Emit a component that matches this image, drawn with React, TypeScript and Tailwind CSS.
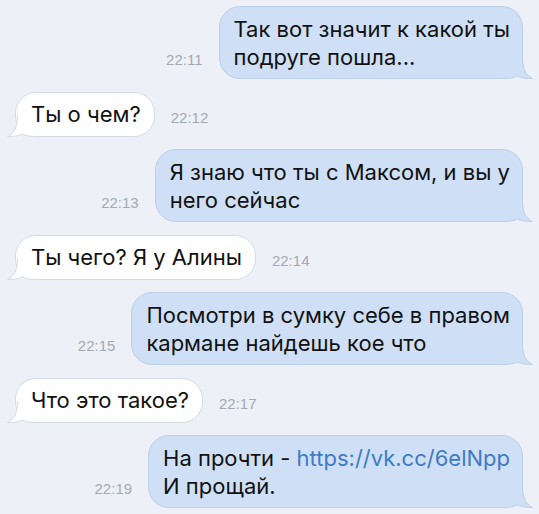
import React from "react";

type Msg = {
  out: boolean;
  time: string;
  lines: React.ReactNode[];
};

const MESSAGES: Msg[] = [
  { out: true, time: "22:11", lines: ["Так вот значит к какой ты", "подруге пошла..."] },
  { out: false, time: "22:12", lines: ["Ты о чем?"] },
  { out: true, time: "22:13", lines: ["Я знаю что ты с Максом, и вы у", "него сейчас"] },
  { out: false, time: "22:14", lines: ["Ты чего? Я у Алины"] },
  { out: true, time: "22:15", lines: ["Посмотри в сумку себе в правом", "кармане найдешь кое что"] },
  { out: false, time: "22:17", lines: ["Что это такое?"] },
  {
    out: true,
    time: "22:19",
    lines: [
      <>
        На прочти - <span className="text-[#3d7bc4]">https://vk.cc/6elNpp</span>
      </>,
      "И прощай.",
    ],
  },
];

// bubble tail, drawn over the bottom corner
function Tail({ out }: { out: boolean }) {
  const fill = out ? "#cfe0f6" : "#ffffff";
  const stroke = out ? "#bccfe8" : "#d5dbe5";
  return (
    <svg
      width="30"
      height="22"
      viewBox="0 0 30 22"
      className={
        out
          ? "absolute right-[-11px] bottom-[-1px]"
          : "absolute left-[-9px] bottom-[-1px] -scale-x-100"
      }
    >
      <path
        d="M0 0 H19.5 C19.5 12 22.5 18 29.5 21.5 C23.5 21.8 18.5 20.8 14.5 19 C11.5 20.8 6.5 21.5 0 21.5 Z"
        fill={fill}
      />
      <path
        d="M19.5 0 C19.5 12 22.5 18 29.5 21.5 C23.5 21.8 18.5 20.8 14.5 19 C11.5 20.8 6.5 21.5 0 21.5"
        fill="none"
        stroke={stroke}
        strokeWidth="1"
      />
    </svg>
  );
}

function Bubble({ msg }: { msg: Msg }) {
  return (
    <div
      className={
        "relative rounded-[21px] border py-[7.5px] whitespace-nowrap text-[22px] leading-[28px] text-[#111] font-['Inter',sans-serif] " +
        (msg.out
          ? "bg-[#cfe0f6] border-[#bccfe8] pl-[14px] pr-[12px]"
          : "bg-white border-[#d5dbe5] pl-[15px] pr-[13px]")
      }
    >
      <Tail out={msg.out} />
      <div className="relative">
        {msg.lines.map((l, i) => (
          <div key={i}>{l}</div>
        ))}
      </div>
    </div>
  );
}

function Time({ t }: { t: string }) {
  return <div className="mb-[10px] text-[15px] leading-[18px] text-[#a4a9b1]">{t}</div>;
}

export default function App() {
  return (
    <div
      className="w-[539px] h-[514px] overflow-hidden bg-[#edf1f7] pt-[6px] flex flex-col gap-[12.5px]"
      style={{ fontFamily: '"Liberation Sans", Arial, sans-serif' }}
    >
      {MESSAGES.map((m, i) =>
        m.out ? (
          <div key={i} className="flex justify-end items-end gap-[16px] pr-[16px]">
            <Time t={m.time} />
            <Bubble msg={m} />
          </div>
        ) : (
          <div key={i} className="flex items-end gap-[16px] pl-[15px]">
            <Bubble msg={m} />
            <Time t={m.time} />
          </div>
        )
      )}
    </div>
  );
}
